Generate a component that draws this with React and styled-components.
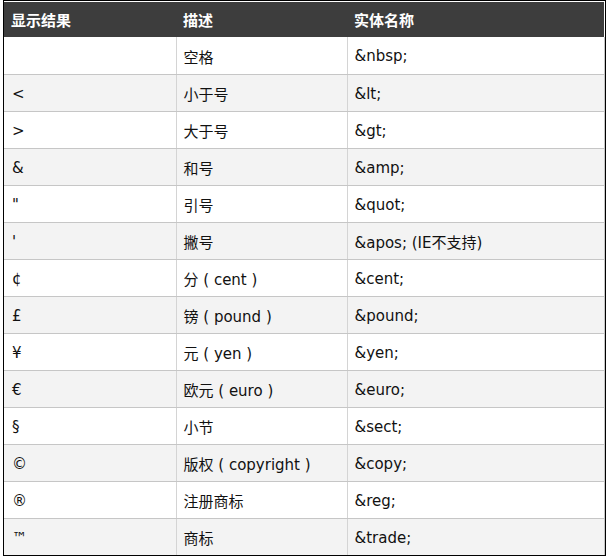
import React from 'react';
import styled, { createGlobalStyle } from 'styled-components';

const GlobalStyle = createGlobalStyle`
    html, body {
        margin:0;
        padding:0;
        background:#ffffff;
    }
    body{
        font-family:"DejaVu Sans", "Noto Sans CJK SC", sans-serif;
    }
`;

const Page = styled.div`
    width:607px;height:558px;
    box-sizing:border-box;
    padding-left:3px;
`;

const Frame = styled.div`
    width:603px;height:556px;
    box-sizing:border-box;
    border:1px solid #000;
    padding-top:1px;
    overflow:hidden;
`;

const Table = styled.table`
    width:600px;
    border-collapse:collapse;
    table-layout:fixed;
    font-size:15px;
    color:#111;
`;

const HeadCell = styled.th`
    height:35px;
    padding:0 7px;
    background-color:#3d3d3d;
    color:#fff;
    font-weight:bold;
    font-size:15px;
    text-align:left;
    box-sizing:border-box;
`;

const Row = styled.tr`
    background-color:${props => props.$shade ? '#f3f3f3' : '#ffffff'};
    td{
        height:37px;
        box-sizing:border-box;
        padding:2px 7px 0 7px;
        border-bottom:1px solid #c6c6c6;
        border-left:1px solid #d4d4d4;
        vertical-align:middle;
        white-space:nowrap;
    }
    td:first-child{
        border-left:none;
        padding-left:8px;
    }
    td:last-child{
        border-right:1px solid #c6c6c6;
    }
`;

const rows = [
    ['', '空格', '&nbsp;'],
    ['<', '小于号', '&lt;'],
    ['>', '大于号', '&gt;'],
    ['&', '和号', '&amp;'],
    ['"', '引号', '&quot;'],
    ["'", '撇号', '&apos; (IE不支持)'],
    ['¢', '分 ( cent )', '&cent;'],
    ['£', '镑 ( pound )', '&pound;'],
    ['¥', '元 ( yen )', '&yen;'],
    ['€', '欧元 ( euro )', '&euro;'],
    ['§', '小节', '&sect;'],
    ['©', '版权 ( copyright )', '&copy;'],
    ['®', '注册商标', '&reg;'],
    ['™', '商标', '&trade;'],
];

const App = () => {
    return (
        <Page>
            <GlobalStyle />
            <Frame>
                <Table>
                    <colgroup>
                        <col style={{ width: 172 }} />
                        <col style={{ width: 171 }} />
                        <col style={{ width: 257 }} />
                    </colgroup>
                    <thead>
                        <tr>
                            <HeadCell>显示结果</HeadCell>
                            <HeadCell>描述</HeadCell>
                            <HeadCell>实体名称</HeadCell>
                        </tr>
                    </thead>
                    <tbody>
                        {rows.map((r, i) => (
                            <Row key={i} $shade={i % 2 === 1}>
                                <td>{r[0]}</td>
                                <td>{r[1]}</td>
                                <td>{r[2]}</td>
                            </Row>
                        ))}
                    </tbody>
                </Table>
            </Frame>
        </Page>
    );
};

export default App;
